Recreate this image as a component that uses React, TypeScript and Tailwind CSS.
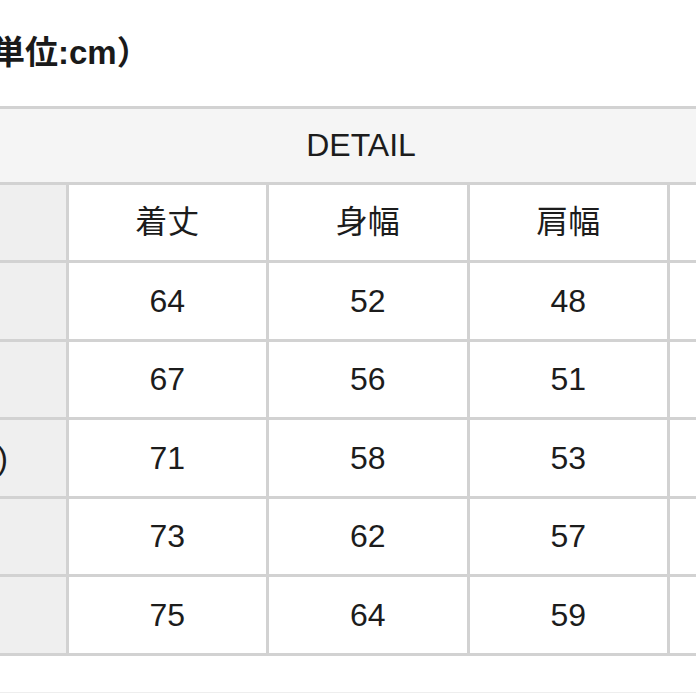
import React from 'react';

const font = { fontFamily: '"Liberation Sans", "Noto Sans CJK JP", sans-serif' };

const heads = ['着丈', '身幅', '肩幅', '袖丈'];

const rows: { size: string; values: number[] }[] = [
  { size: 'S', values: [64, 52, 48, 20] },
  { size: 'M', values: [67, 56, 51, 21] },
  { size: 'L (LL)', values: [71, 58, 53, 22] },
  { size: 'XL', values: [73, 62, 57, 23] },
  { size: 'XXL', values: [75, 64, 59, 24] },
];

function Row({ first, cells }: { first: string; cells: (string | number)[] }) {
  return (
    <div className="grid grid-cols-[200.5px_200.5px_200.5px_200.5px_200.5px] border-b-[3px] border-[#d2d2d2]">
      <div className="h-[75.5px] flex items-center justify-center bg-[#efefef] border-r-[3px] border-[#d2d2d2] text-[32px] text-[#1c1c1c] whitespace-nowrap">
        {first}
      </div>
      {cells.map((c, i) => (
        <div
          key={i}
          className="h-[75.5px] flex items-center justify-center bg-white border-r-[3px] border-[#d2d2d2] text-[32px] text-[#1c1c1c]"
        >
          {c}
        </div>
      ))}
    </div>
  );
}

export default function App() {
  return (
    <div className="w-[696px] h-[696px] overflow-hidden bg-white" style={font}>
      <div className="pt-[31px] h-[106px]">
        <p className="ml-[-41px] text-[33px] leading-[44px] font-bold text-[#1a1a1a] whitespace-nowrap">
          （単位:cm）
        </p>
      </div>

      <div className="ml-[-132px] w-[1004px] border-t-[3px] border-[#d2d2d2]">
        <div className="h-[75.5px] flex items-center justify-center pr-[18px] bg-[#f5f5f5] border-b-[3px] border-[#d2d2d2] text-[32px] text-[#1c1c1c]">
          DETAIL
        </div>
        <Row first="" cells={heads} />
        {rows.map((r) => (
          <Row key={r.size} first={r.size} cells={r.values} />
        ))}
      </div>

      <div className="h-[37px] border-b border-[#eeeeee]" />
    </div>
  );
}
